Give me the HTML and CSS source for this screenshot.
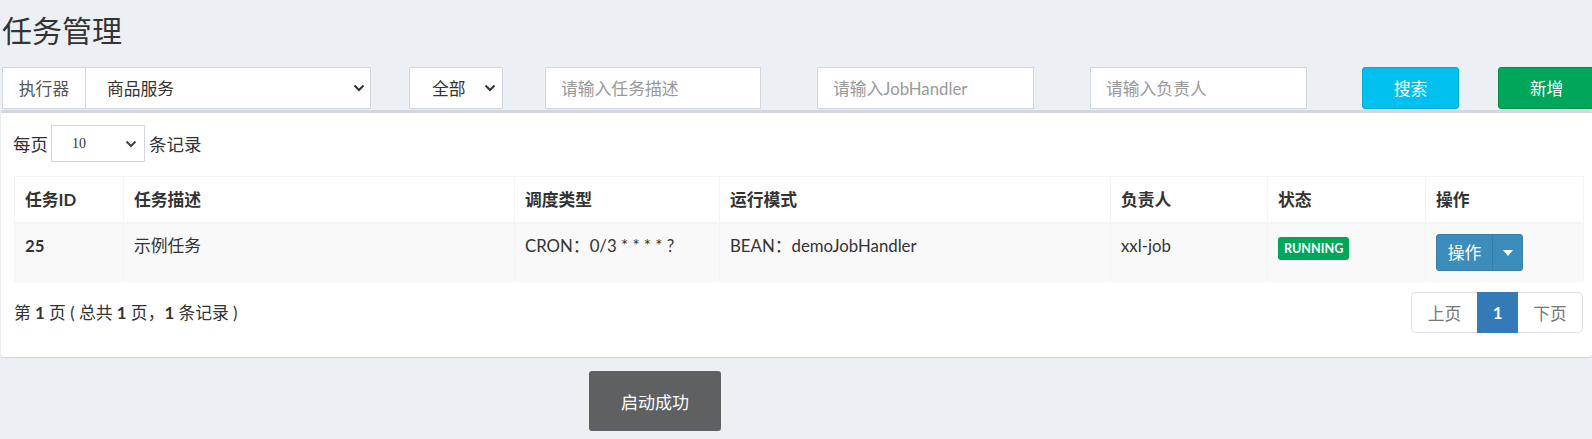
FILE: index.html
```html
<!DOCTYPE html>
<html lang="zh-CN">
<head>
<meta charset="utf-8">
<title>任务管理</title>
<link rel="stylesheet" href="styles.css">
</head>
<body>
<div class="page">
  <h1 class="title">任务管理</h1>

  <div class="filters">
    <div class="group">
      <span class="addon">执行器</span>
      <div class="select sel-exec"><span>商品服务</span><svg class="chev" width="12" height="8" viewBox="0 0 12 8"><path d="M1.5 1.5 L6 6 L10.5 1.5" fill="none" stroke="#333" stroke-width="2"/></svg></div>
    </div>
    <div class="select sel-status"><span>全部</span><svg class="chev" width="12" height="8" viewBox="0 0 12 8"><path d="M1.5 1.5 L6 6 L10.5 1.5" fill="none" stroke="#333" stroke-width="2"/></svg></div>
    <div class="input in-desc">请输入任务描述</div>
    <div class="input in-handler">请输入JobHandler</div>
    <div class="input in-author">请输入负责人</div>
    <div class="btn btn-search">搜索</div>
    <div class="btn btn-add">新增</div>
  </div>

  <div class="box">
    <div class="length">
      <span class="len-text">每页</span>
      <div class="select sel-len"><span>10</span><svg class="chev" width="12" height="8" viewBox="0 0 12 8"><path d="M1.5 1.5 L6 6 L10.5 1.5" fill="none" stroke="#444" stroke-width="2"/></svg></div>
      <span class="len-text">条记录</span>
    </div>

    <table class="grid">
      <colgroup>
        <col class="c1"><col class="c2"><col class="c3"><col class="c4"><col class="c5"><col class="c6"><col class="c7">
      </colgroup>
      <thead>
        <tr><th>任务ID</th><th>任务描述</th><th>调度类型</th><th>运行模式</th><th>负责人</th><th>状态</th><th>操作</th></tr>
      </thead>
      <tbody>
        <tr>
          <td class="b">25</td>
          <td>示例任务</td>
          <td>CRON：0/3 * * * * ?</td>
          <td>BEAN：demoJobHandler</td>
          <td>xxl-job</td>
          <td><span class="label">RUNNING</span></td>
          <td>
            <div class="btn-group">
              <span class="bg-main">操作</span><span class="bg-caret"><svg width="10" height="6" viewBox="0 0 10 6"><path d="M0 0 L10 0 L5 6 Z" fill="#fff"/></svg></span>
            </div>
          </td>
        </tr>
      </tbody>
    </table>

    <div class="footer">
      <div class="info">第 <b>1</b> 页 ( 总共 <b>1</b> 页，<b>1</b> 条记录 )</div>
      <ul class="pager">
        <li class="pg disabled">上页</li>
        <li class="pg active">1</li>
        <li class="pg disabled last">下页</li>
      </ul>
    </div>
  </div>
</div>

<div class="toast">启动成功</div>
</body>
</html>
```

FILE: styles.css
```css
html, body {
  margin: 0;
  padding: 0;
}
body {
  background: #ecf0f5;
  font-family: Lato, "Noto Sans CJK SC", sans-serif;
  font-size: 16.8px;
  color: #333;
  overflow: hidden;
  width: 1592px;
  height: 439px;
  position: relative;
}
.page {
  padding: 0;
}
.title {
  margin: 12px 0 0 2px;
  font-size: 30px;
  font-weight: 400;
  line-height: 36px;
  color: #333;
}
.filters {
  display: flex;
  margin-top: 19px;
  height: 42px;
}
.filters > * {
  flex-shrink: 0;
  box-sizing: border-box;
  height: 42px;
}
.group {
  display: flex;
  margin-left: 2px;
  width: 369px;
}
.addon {
  box-sizing: border-box;
  width: 84px;
  border: 1px solid #d2d6de;
  background: #fff;
  color: #555;
  display: flex;
  align-items: center;
  justify-content: center;
}
.select {
  box-sizing: border-box;
  border: 1px solid #d2d6de;
  background: #fff;
  display: flex;
  align-items: center;
  color: #333;
  flex-shrink: 0;
}
.select .chev {
  margin-left: auto;
}
.sel-exec {
  width: 285px;
  border-left: none;
  padding: 0 5px 0 21px;
}
.sel-status {
  margin-left: 38px;
  width: 94px;
  padding: 0 6px 0 22px;
}
.input {
  box-sizing: border-box;
  border: 1px solid #d2d6de;
  background: #fff;
  color: #999;
  display: flex;
  align-items: center;
  padding-left: 15px;
}
.in-desc { margin-left: 42px; width: 216px; }
.in-handler { margin-left: 56px; width: 217px; }
.in-author { margin-left: 56px; width: 217px; }
.btn {
  color: #fff;
  border-radius: 3px;
  display: flex;
  align-items: center;
  justify-content: center;
  width: 97px;
}
.btn-search {
  margin-left: 55px;
  background: #00c0ef;
  border: 1px solid #00acd6;
}
.btn-add {
  margin-left: 39px;
  background: #00a65a;
  border: 1px solid #008d4c;
}

.box {
  margin: 1px 0 0 1px;
  background: #fff;
  border-top: 3px solid #d2d6de;
  border-radius: 3px;
  box-shadow: 0 1px 1px rgba(0,0,0,0.12);
  padding: 12px 9px 24px 12px;
}
.length {
  display: flex;
  align-items: center;
  height: 37px;
}
.len-text {
  font-size: 17.5px;
}
.sel-len {
  width: 94px;
  height: 37px;
  margin: 0 4px 0 3px;
  padding: 0 7px 0 20px;
  font-family: "Liberation Serif", serif;
  font-size: 14px;
  color: #333;
}
.grid {
  margin: 14px 0 0 1px;
  width: 1569px;
  border-collapse: collapse;
  table-layout: fixed;
  border: 1px solid #f4f4f4;
}
.c1 { width: 109px; }
.c2 { width: 391px; }
.c3 { width: 205px; }
.c4 { width: 391px; }
.c5 { width: 157px; }
.c6 { width: 158px; }
.c7 { width: 158px; }
.grid th {
  text-align: left;
  font-weight: 700;
  padding: 0 10px;
  height: 45px;
  line-height: 24px;
  border: 1px solid #f4f4f4;
  border-bottom: 2px solid #f4f4f4;
  background: #fff;
}
.grid td {
  vertical-align: top;
  padding: 10px 10px;
  line-height: 24px;
  height: 37px;
  border: 1px solid #f4f4f4;
  background: #f9f9f9;
}
.grid td.b {
  font-weight: 700;
}
.label {
  display: inline-block;
  margin-top: 3px;
  background: #00a65a;
  color: #fff;
  font-size: 12.6px;
  font-weight: 700;
  line-height: 15px;
  padding: 4px 6px;
  border-radius: 3px;
}
.btn-group {
  display: inline-flex;
  height: 37px;
  border-radius: 3px;
  overflow: hidden;
  border: 1px solid #367fa9;
  box-sizing: border-box;
  background: #3c8dbc;
  color: #fff;
}
.bg-main {
  width: 55px;
  display: flex;
  align-items: center;
  justify-content: center;
  border-right: 1px solid #367fa9;
}
.bg-caret {
  width: 29px;
  display: flex;
  align-items: center;
  justify-content: center;
}

.footer {
  display: flex;
  align-items: center;
  justify-content: space-between;
  margin-top: 10px;
  padding-left: 1px;
}
.info {
  color: #333;
  margin-top: -2px;
}
.pager {
  list-style: none;
  margin: 0;
  padding: 0;
  display: flex;
  height: 41px;
}
.pg {
  box-sizing: border-box;
  height: 41px;
  display: flex;
  align-items: center;
  justify-content: center;
  border: 1px solid #ddd;
  background: #fff;
  color: #777;
}
.pg.disabled:first-child {
  width: 66px;
  border-radius: 5px 0 0 5px;
  border-right: none;
}
.pg.active {
  width: 41px;
  background: #337ab7;
  border-color: #337ab7;
  color: #fff;
  font-weight: 700;
}
.pg.last {
  width: 65px;
  border-left: none;
  border-radius: 0 5px 5px 0;
}
.toast {
  position: absolute;
  left: 589px;
  top: 371px;
  width: 132px;
  height: 60px;
  border-radius: 3px;
  background: rgba(0,0,0,0.6);
  color: #fff;
  font-size: 17px;
  display: flex;
  align-items: center;
  justify-content: center;
}
```
